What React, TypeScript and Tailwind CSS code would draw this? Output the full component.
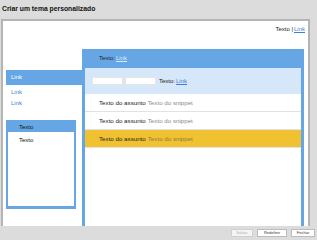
import React from "react";

const font = { fontFamily: '"Liberation Sans", Arial, sans-serif' };

function Row({ yellow }: { yellow?: boolean }) {
  return (
    <div
      className={`h-[18px] flex items-center pl-[14px] border-b border-[#e2e2e2] text-[6.2px] ${
        yellow ? "bg-[#f0c232]" : "bg-white"
      }`}
    >
      <span className="text-[#222]">Texto do assunto</span>
      <span className={`ml-[2px] ${yellow ? "text-[#8a7a4a]" : "text-[#8a8a8a]"}`}>Texto do snippet</span>
    </div>
  );
}

export default function App() {
  return (
    <div className="w-[317px] h-[240px] bg-[#dcdcdc] flex flex-col overflow-hidden" style={font}>
      <div className="h-[19px] pl-[2px] pt-[6px] text-[6.8px] font-bold text-[#111] leading-none">
        Criar um tema personalizado
      </div>
      <div className="ml-[1px] w-[309px] h-[207px] bg-white border-l-2 border-t-2 border-r-2 border-[#b4b4b4] flex flex-col">
        <div className="h-[28px] flex justify-end pr-[3px] pt-[5px] text-[6px] leading-none text-[#222]">
          <span>Texto | </span>
          <span className="text-[#3a7fd6] underline ml-[1px]">Link</span>
        </div>
        <div className="flex flex-1 pl-[3px]">
          <div className="w-[76px] flex flex-col pt-[21px]">
            <div className="h-[15px] bg-[#67a6e4] flex items-center pl-[5px] text-[6px] text-white">Link</div>
            <div className="pl-[5px] pt-[4px] text-[6px] text-[#3a7fd6] leading-none">Link</div>
            <div className="pl-[5px] pt-[5px] text-[6px] text-[#3a7fd6] leading-none">Link</div>
            <div className="mt-[14px] w-[70px] h-[89px] border-2 border-b-[3px] border-[#67a6e4] flex flex-col">
              <div className="h-[10px] bg-[#67a6e4] flex items-center pl-[11px] text-[6px] text-[#111]">Texto</div>
              <div className="pl-[11px] pt-[5px] text-[6px] text-[#111] leading-none">Texto</div>
            </div>
          </div>
          <div className="w-[222px] h-[177px] border-x-[3px] border-t-[3px] border-[#67a6e4] flex flex-col">
            <div className="h-[16px] bg-[#67a6e4] flex items-center pl-[14px] text-[6px] text-[#222] pb-[3px]">
              <span>Texto: </span>
              <span className="text-[#d8ebff] underline ml-[1px]">Link</span>
            </div>
            <div className="h-[26px] bg-[#d5e7f8] flex items-center pl-[7px] text-[6px] text-[#222]">
              <div className="w-[31px] h-[8px] bg-white border border-[#e6e6e6]" />
              <div className="w-[31px] h-[8px] bg-white border border-[#e6e6e6] ml-[2px]" />
              <span className="ml-[3px]">Texto: </span>
              <span className="text-[#3a7fd6] underline ml-[1px]">Link</span>
            </div>
            <Row />
            <Row />
            <Row yellow />
          </div>
        </div>
      </div>
      <div className="flex-1 flex justify-end items-center gap-[4px] pr-[2px] pb-[1px]">
        <div className="w-[22px] h-[8px] bg-[#f4f4f4] border border-[#d0d0d0] flex items-center justify-center text-[4px] text-[#b0b0b0]">
          Salvar
        </div>
        <div className="w-[30px] h-[8px] bg-white border border-[#bcbcbc] flex items-center justify-center text-[4px] text-[#333]">
          Redefinir
        </div>
        <div className="w-[24px] h-[8px] bg-white border border-[#bcbcbc] flex items-center justify-center text-[4px] text-[#333]">
          Fechar
        </div>
      </div>
    </div>
  );
}
